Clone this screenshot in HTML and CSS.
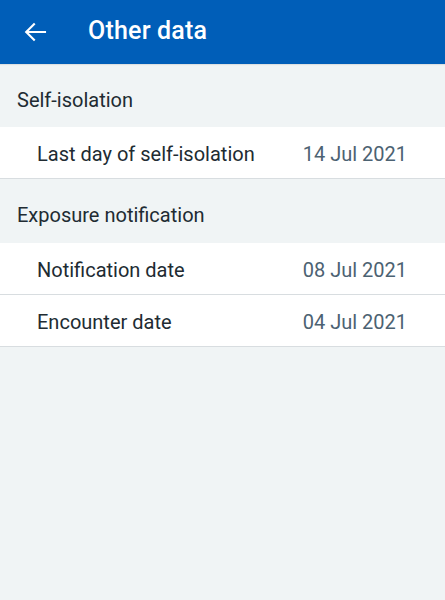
FILE: index.html
```html
<!DOCTYPE html>
<html lang="en">
<head>
  <meta charset="UTF-8">
  <meta name="viewport" content="width=device-width, initial-scale=1.0">
  <title>Other data</title>
  <link rel="stylesheet" href="styles.css">
</head>
<body>

  <header class="toolbar">
    <button class="back" aria-label="Back">
      <svg width="24" height="24" viewBox="0 0 24 24">
        <path d="M22 12H3.5M11 4.2L3.2 12L11 19.8" fill="none" stroke="#fff" stroke-width="2.1" stroke-linecap="square"/>
      </svg>
    </button>
    <h1 class="title">Other data</h1>
  </header>

  <section class="group">
    <h2 class="group-title">Self-isolation</h2>
    <div class="row">
      <span class="label">Last day of self-isolation</span>
      <span class="value">14 Jul 2021</span>
    </div>
  </section>

  <section class="group">
    <h2 class="group-title second">Exposure notification</h2>
    <div class="row">
      <span class="label">Notification date</span>
      <span class="value">08 Jul 2021</span>
    </div>
    <div class="row">
      <span class="label">Encounter date</span>
      <span class="value">04 Jul 2021</span>
    </div>
  </section>

</body>
</html>
```

FILE: styles.css
```css
body {
  margin: 0;
  height: 100vh;
  background: #f0f4f5;
  font-family: Roboto, "Liberation Sans", sans-serif;
  color: #212b32;
}
.toolbar {
  display: flex;
  align-items: center;
  height: 64px;
  box-sizing: border-box;
  background: #005eb8;
  box-shadow: 0 1px 1px rgba(0,0,0,0.08);
}
.back {
  display: flex;
  width: 24px;
  height: 24px;
  margin-left: 23px;
  padding: 0;
  border: none;
  background: none;
}
.title {
  margin: 0 0 3px 41px;
  font-size: 25px;
  font-weight: 500;
  line-height: 28px;
  letter-spacing: 0.2px;
  color: #fff;
}
.group-title {
  margin: 0;
  padding: 24px 17px 15px;
  font-size: 20px;
  font-weight: 400;
  line-height: 24px;
}
.group-title.second {
  padding-bottom: 16px;
}
.row {
  display: flex;
  justify-content: space-between;
  padding: 15px 38px 12px 37px;
  background: #fff;
  border-bottom: 1px solid #d8dde0;
  font-size: 20px;
  line-height: 24px;
}
.value {
  color: #4c6272;
}
```
